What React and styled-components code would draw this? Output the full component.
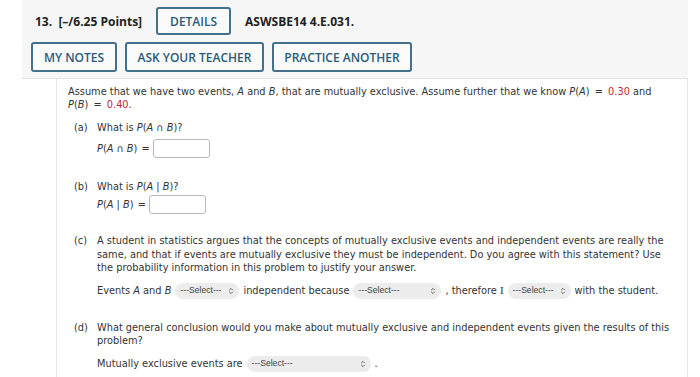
import React from "react";
import styled, { createGlobalStyle } from "styled-components";

const Global = createGlobalStyle`
  body {
    margin: 0;
    background: #fff;
  }
`;

const Page = styled.div`
  width: 666px;
  margin-left: 22px;
`;

const Header = styled.div`
  background: #f6f6f6;
  border-bottom: 1px solid #e2e2e2;
  padding: 7px 9px 6px;
  font-family: "Open Sans", sans-serif;
  font-size: 12px;
  color: #222;
`;

const HeaderRow = styled.div`
  display: flex;
  align-items: center;
  gap: ${(p) => p.gap || 8}px;
  & + & {
    margin-top: 7px;
  }
`;

const Title = styled.span`
  font-weight: 700;
  margin-left: ${(p) => p.indent || 0}px;
  white-space: pre;
`;

const OutlineButton = styled.button`
  height: ${(p) => p.h || 30}px;
  width: ${(p) => p.w}px;
  box-sizing: border-box;
  border: 2px solid #44708c;
  border-radius: 3px;
  background: #fafafa;
  color: #2c5a78;
  font-family: "Open Sans", sans-serif;
  font-weight: 600;
  font-size: 12px;
  padding: 0;
`;

const Body = styled.div`
  margin-left: 34px;
  border-left: 1px solid #e4e4e4;
  border-right: 1px solid #e4e4e4;
  padding: 6px 14px 10px 11px;
  font-family: "DejaVu Sans", Verdana, sans-serif;
  font-size: 9.8px;
  line-height: 13px;
  color: #333;
`;

const Para = styled.p`
  margin: 0;
  line-height: ${(p) => p.lh || 13}px;
`;

const Red = styled.span`
  color: #c0282e;
`;

const Eq = styled.span`
  margin: 0 ${(p) => (p.tight ? 1 : 2)}px;
`;

const Part = styled.div`
  display: grid;
  grid-template-columns: 23px 1fr;
  margin: ${(p) => p.top || 10}px 0 0 6px;
`;

const Label = styled.span`
  line-height: 13px;
`;

const AnswerRow = styled.div`
  display: flex;
  align-items: center;
  gap: 2px;
  margin-top: ${(p) => p.top || 6}px;
`;

const TextBox = styled.span`
  display: inline-block;
  width: 57px;
  height: 19px;
  box-sizing: border-box;
  border: 1px solid #b9b9b9;
  border-radius: 3px;
  background: #fff;
`;

const SelectBox = styled.span`
  display: inline-flex;
  align-items: center;
  justify-content: space-between;
  width: ${(p) => p.w}px;
  height: 16px;
  box-sizing: border-box;
  padding: 0 4px 0 5px;
  margin: 0 4px;
  border-radius: 8px;
  background: #ececec;
  font-family: "Liberation Sans", Arial, sans-serif;
  font-size: 8.6px;
  color: #444;
`;

const SerifI = styled.span`
  font-family: "Liberation Serif", serif;
  font-size: 11px;
  margin-left: 3px;
`;

const Chevrons = () => (
  <svg width="8" height="8" viewBox="0 0 8 8" fill="none" stroke="#555" strokeWidth="0.9">
    <path d="M2.2 3.2 L4 1.4 L5.8 3.2" />
    <path d="M2.2 4.8 L4 6.6 L5.8 4.8" />
  </svg>
);

const Select = ({ w }) => (
  <SelectBox w={w}>
    <span>---Select---</span>
    <Chevrons />
  </SelectBox>
);

const Inline = styled.div`
  display: flex;
  align-items: center;
  margin-top: ${(p) => p.top || 10}px;
  height: 16px;
  white-space: pre;
`;

export default function App() {
  return (
    <>
      <Global />
      <Page>
        <Header>
          <HeaderRow gap={14}>
            <Title indent={4}>13.  [–/6.25 Points]</Title>
            <OutlineButton w={75} h={28}>DETAILS</OutlineButton>
            <Title>ASWSBE14 4.E.031.</Title>
          </HeaderRow>
          <HeaderRow gap={8}>
            <OutlineButton w={86}>MY NOTES</OutlineButton>
            <OutlineButton w={139}>ASK YOUR TEACHER</OutlineButton>
            <OutlineButton w={140}>PRACTICE ANOTHER</OutlineButton>
          </HeaderRow>
        </Header>
        <Body>
          <Para>
            Assume that we have two events, <i>A</i> and <i>B</i>, that are mutually exclusive. Assume
            further that we know <i>P</i>(<i>A</i>) <Eq>=</Eq> <Red>0.30</Red> and <i>P</i>(<i>B</i>){" "}
            <Eq>=</Eq> <Red>0.40</Red>.
          </Para>

          <Part top={10}>
            <Label>(a)</Label>
            <div>
              <Para>
                What is <i>P</i>(<i>A</i> ∩ <i>B</i>)?
              </Para>
              <AnswerRow top={5}>
                <span>
                  <i>P</i>(<i>A</i> ∩ <i>B</i>) <Eq tight>=</Eq>
                </span>
                <TextBox />
              </AnswerRow>
            </div>
          </Part>

          <Part top={22}>
            <Label>(b)</Label>
            <div>
              <Para>
                What is <i>P</i>(<i>A</i> | <i>B</i>)?
              </Para>
              <AnswerRow top={2}>
                <span>
                  <i>P</i>(<i>A</i> | <i>B</i>) <Eq tight>=</Eq>
                </span>
                <TextBox />
              </AnswerRow>
            </div>
          </Part>

          <Part top={20}>
            <Label>(c)</Label>
            <div>
              <Para lh={13.5}>
                A student in statistics argues that the concepts of mutually exclusive events and
                independent events are really the same, and that if events are mutually exclusive
                they must be independent. Do you agree with this statement? Use the probability
                information in this problem to justify your answer.
              </Para>
              <Inline top={8}>
                Events <i>A</i> and <i>B</i>
                <Select w={64} />
                independent because
                <Select w={88} />
                , therefore<SerifI>I</SerifI>
                <Select w={63} />
                with the student.
              </Inline>
            </div>
          </Part>

          <Part top={22}>
            <Label>(d)</Label>
            <div>
              <Para>
                What general conclusion would you make about mutually exclusive and independent
                events given the results of this problem?
              </Para>
              <Inline top={9}>
                Mutually exclusive events are
                <Select w={124} />.
              </Inline>
            </div>
          </Part>
        </Body>
      </Page>
    </>
  );
}
